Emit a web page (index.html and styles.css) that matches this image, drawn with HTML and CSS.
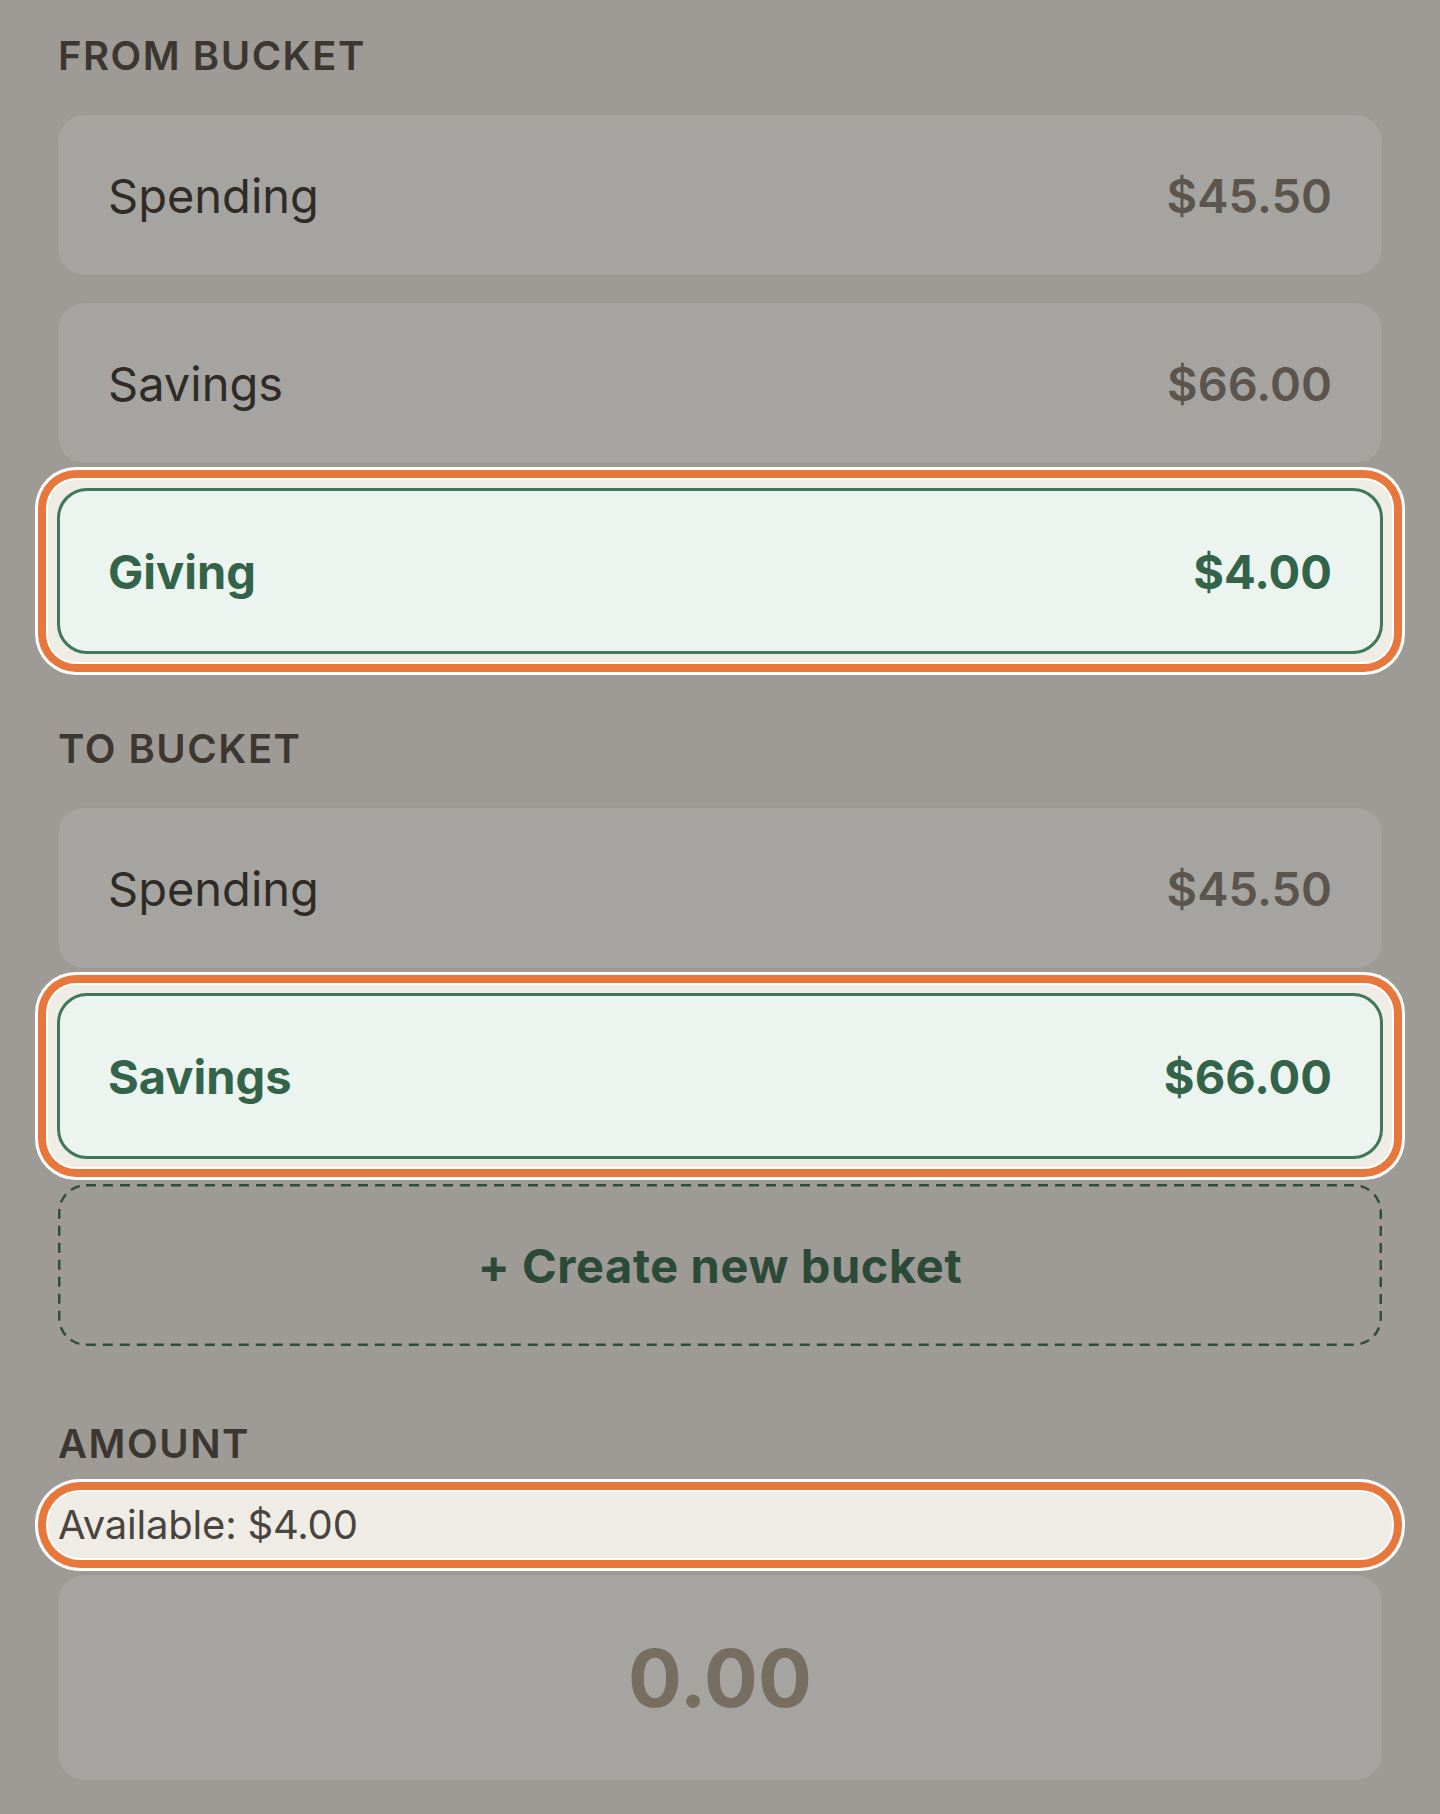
FILE: index.html
```html
<!DOCTYPE html>
<html lang="en">

<head>
    <meta charset="UTF-8">
    <meta name="viewport" content="width=device-width, initial-scale=1.0">
    <title>Move Money</title>
    <link rel="stylesheet" href="styles.css">
</head>

<body>
    <main class="transfer">
        <section class="field">
            <h2 class="field-label">From bucket</h2>
            <div class="bucket-list">
                <button class="bucket">
                    <span class="bucket-name">Spending</span>
                    <span class="bucket-balance">$45.50</span>
                </button>
                <button class="bucket">
                    <span class="bucket-name">Savings</span>
                    <span class="bucket-balance">$66.00</span>
                </button>
                <div class="spotlight">
                    <button class="bucket selected">
                        <span class="bucket-name">Giving</span>
                        <span class="bucket-balance">$4.00</span>
                    </button>
                </div>
            </div>
        </section>

        <section class="field">
            <h2 class="field-label">To bucket</h2>
            <div class="bucket-list">
                <button class="bucket">
                    <span class="bucket-name">Spending</span>
                    <span class="bucket-balance">$45.50</span>
                </button>
                <div class="spotlight">
                    <button class="bucket selected">
                        <span class="bucket-name">Savings</span>
                        <span class="bucket-balance">$66.00</span>
                    </button>
                </div>
                <button class="new-bucket">+ Create new bucket</button>
            </div>
        </section>

        <section class="field">
            <h2 class="field-label amount-label">Amount</h2>
            <div class="spotlight spotlight-line">
                <p class="available">Available: $4.00</p>
            </div>
            <div class="amount-input">0.00</div>
        </section>
    </main>
</body>

</html>
```

FILE: styles.css
```css
* {
    margin: 0;
    padding: 0;
    box-sizing: border-box;
}

body {
    font-family: Inter, "Noto Sans", sans-serif;
    background: #9e9a96;
    color: #2f2b27;
}

button {
    font: inherit;
    color: inherit;
    background: none;
    border: none;
    cursor: pointer;
}

.transfer {
    display: flex;
    flex-direction: column;
    gap: 74px;
    padding: 32px 58px 34px;
}

.field-label {
    font-size: 40px;
    line-height: 48px;
    font-weight: 600;
    letter-spacing: 1.5px;
    text-transform: uppercase;
    color: #3d3731;
    margin-bottom: 35px;
}

.amount-label {
    margin-bottom: 32px;
}

.bucket-list {
    display: flex;
    flex-direction: column;
    gap: 28px;
}

.bucket {
    display: flex;
    align-items: center;
    justify-content: space-between;
    width: 100%;
    height: 160px;
    padding: 0 50px;
    background: #a6a4a1;
    border-radius: 26px;
    box-shadow: 0 0 0 1px rgba(0, 0, 0, 0.025);
}

.bucket-name {
    font-size: 47px;
    font-weight: 400;
    color: #2f2b27;
}

.bucket-balance {
    font-size: 47px;
    font-weight: 600;
    color: #5b554e;
}

/* highlighted element: cream pad with white / orange / white rings */
.spotlight {
    margin: -11px -10px;
    padding: 8px 9px;
    background: #efece6;
    border-radius: 28px;
    box-shadow:
        0 0 0 2px #fff,
        0 0 0 10px #e8773c,
        0 0 0 13px #fff;
}

.bucket.selected {
    height: 166px;
    padding: 0 48px;
    background: #ebf4ee;
    border: 3px solid #3f7858;
    border-radius: 30px;
    box-shadow: none;
}

.bucket.selected .bucket-name,
.bucket.selected .bucket-balance {
    font-weight: 700;
    color: #33644a;
}

/* long dashes drawn with an svg rect, browser dashes come out too short */
.new-bucket {
    width: 100%;
    height: 162px;
    border-radius: 28px;
    background-image: url("data:image/svg+xml,%3csvg xmlns='http://www.w3.org/2000/svg' width='100%25' height='100%25'%3e%3crect width='100%25' height='100%25' fill='none' rx='28' ry='28' stroke='%232E4D3B' stroke-width='5' stroke-dasharray='10%2c 7'/%3e%3c/svg%3e");
    font-size: 47px;
    font-weight: 700;
    letter-spacing: 0.6px;
    color: #2b4a38;
    text-align: center;
}

.spotlight-line {
    margin: -8px -10px;
    padding: 8px 10px;
    border-radius: 32px;
}

.available {
    font-size: 40px;
    line-height: 50px;
    font-weight: 400;
    letter-spacing: -0.2px;
    color: #4a443e;
}

.amount-input {
    display: flex;
    align-items: center;
    justify-content: center;
    height: 205px;
    margin-top: 25px;
    background: #a6a4a1;
    border-radius: 26px;
    box-shadow: 0 0 0 1px rgba(0, 0, 0, 0.025);
    font-size: 80px;
    font-weight: 700;
    color: #776d60;
}
```
